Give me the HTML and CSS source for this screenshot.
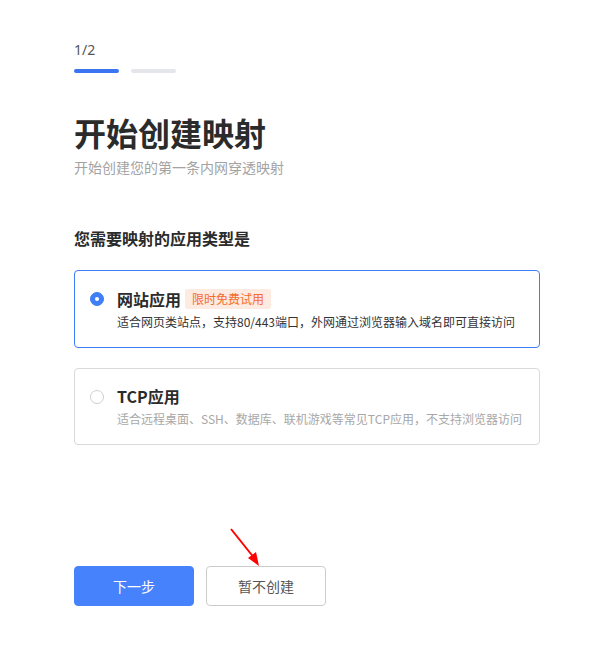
FILE: index.html
```html
<!DOCTYPE html>
<html lang="zh-CN">
<head>
<meta charset="utf-8">
<title>开始创建映射</title>
<link rel="stylesheet" href="styles.css">
</head>
<body>
<div class="page">
  <div class="step">1/2</div>
  <div class="progress">
    <span class="bar active"></span>
    <span class="bar"></span>
  </div>
  <h1 class="title">开始创建映射</h1>
  <p class="subtitle">开始创建您的第一条内网穿透映射</p>
  <h2 class="question">您需要映射的应用类型是</h2>
  <div class="options">
    <div class="option selected">
      <span class="radio checked"></span>
      <div class="option-body">
        <div class="option-head">
          <span class="option-name">网站应用</span>
          <span class="badge">限时免费试用</span>
        </div>
        <div class="option-desc">适合网页类站点，支持80/443端口，外网通过浏览器输入域名即可直接访问</div>
      </div>
    </div>
    <div class="option">
      <span class="radio"></span>
      <div class="option-body">
        <div class="option-head">
          <span class="option-name">TCP应用</span>
        </div>
        <div class="option-desc muted">适合远程桌面、SSH、数据库、联机游戏等常见TCP应用，不支持浏览器访问</div>
      </div>
    </div>
  </div>
  <div class="actions">
    <button class="btn primary">下一步</button>
    <button class="btn default">暂不创建</button>
  </div>
</div>
<svg class="arrow" width="60" height="60" viewBox="0 0 60 60">
  <line x1="11" y1="9" x2="35" y2="39" stroke="#ff0000" stroke-width="2"/>
  <polygon points="39,46 28,38 36,32" fill="#ff0000"/>
</svg>
</body>
</html>
```

FILE: styles.css
```css
html, body {
  margin: 0;
  padding: 0;
  background: #ffffff;
}
body {
  font-family: "Noto Sans CJK SC", "Noto Sans", sans-serif;
  color: #333333;
  position: relative;
  width: 592px;
  height: 657px;
  overflow: hidden;
}
.page {
  padding: 40px 0 0 74px;
  width: 466px;
}
.step {
  font-family: "Noto Sans", "Noto Sans CJK SC", sans-serif;
  font-size: 14px;
  line-height: 20px;
  color: #555555;
}
.progress {
  display: flex;
  gap: 12px;
  margin-top: 9px;
}
.bar {
  width: 45px;
  height: 4px;
  border-radius: 2px;
  background: #e4e6eb;
}
.bar.active {
  background: #3b74f0;
}
.title {
  margin: 37px 0 0;
  font-size: 32px;
  line-height: 44px;
  font-weight: 700;
  color: #2b2b2b;
}
.subtitle {
  margin: 2px 0 0;
  font-size: 14px;
  line-height: 22px;
  color: #a3a3a3;
}
.question {
  margin: 48px 0 0;
  font-size: 16px;
  line-height: 24px;
  font-weight: 700;
  color: #2b2b2b;
}
.options {
  margin-top: 20px;
  display: flex;
  flex-direction: column;
  gap: 20px;
}
.option {
  box-sizing: border-box;
  height: 78px;
  border: 1px solid #d9d9d9;
  border-radius: 4px;
  display: flex;
  align-items: center;
  padding: 0 0 0 15px;
  gap: 13px;
}
.option + .option {
  height: 77px;
}
.option.selected {
  border-color: #3f7ef6;
}
.radio {
  box-sizing: border-box;
  width: 14px;
  height: 14px;
  border-radius: 50%;
  border: 1px solid #cfcfcf;
  background: #ffffff;
  flex: none;
  margin-top: -20px;
  position: relative;
}
.radio.checked {
  border-color: #3f7ef6;
  background: #3f7ef6;
}
.radio.checked::after {
  content: "";
  position: absolute;
  left: 4px;
  top: 4px;
  width: 4px;
  height: 4px;
  border-radius: 50%;
  background: #ffffff;
}
.option-body {
  display: flex;
  flex-direction: column;
  gap: 1px;
}
.option-head {
  display: flex;
  align-items: center;
  gap: 4px;
  height: 24px;
}
.option-name {
  font-size: 16px;
  line-height: 24px;
  font-weight: 700;
  color: #2b2b2b;
}
.badge {
  font-size: 12px;
  line-height: 20px;
  padding: 0 7px;
  border-radius: 2px;
  background: #fdeae1;
  color: #f56a2c;
}
.option-desc {
  font-size: 12px;
  line-height: 20px;
  color: #333333;
  white-space: nowrap;
}
.option-desc.muted {
  color: #a8a8a8;
}
.actions {
  margin-top: 121px;
  display: flex;
  gap: 12px;
}
.btn {
  box-sizing: border-box;
  width: 120px;
  height: 40px;
  border-radius: 4px;
  font-family: "Noto Sans CJK SC", "Noto Sans", sans-serif;
  font-size: 14px;
  cursor: pointer;
}
.btn.primary {
  background: #4582fb;
  border: 1px solid #4582fb;
  color: #ffffff;
}
.btn.default {
  background: #ffffff;
  border: 1px solid #cccccc;
  color: #555555;
}
.arrow {
  position: absolute;
  left: 220px;
  top: 520px;
}
```
